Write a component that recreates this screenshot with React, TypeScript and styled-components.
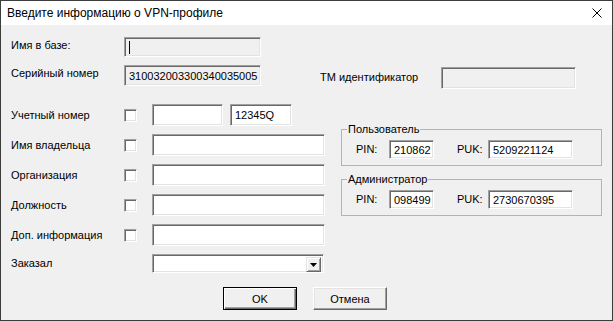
import React from "react";
import styled, { createGlobalStyle, css } from "styled-components";

const GlobalStyle = createGlobalStyle`
  html, body { margin: 0; padding: 0; background: #ffffff; }
  body { font-family: "Liberation Sans", Arial, sans-serif; }
  * { box-sizing: border-box; }
`;

const UI_FONT = `11px "Liberation Sans", Arial, sans-serif`;

const Window = styled.div`
  width: 613px;
  height: 321px;
  border: 1px solid #3c3c3c;
  display: flex;
  flex-direction: column;
  background: #f0f0f0;
  font: ${UI_FONT};
  color: #000;
  overflow: hidden;
`;

const TitleBar = styled.div`
  height: 24px;
  flex: none;
  background: #ffffff;
  display: flex;
  align-items: center;
  justify-content: space-between;
  padding: 0 10px 0 6px;
`;

const Title = styled.span`
  font: 12px "Liberation Sans", Arial, sans-serif;
  color: #000;
`;

const CloseIcon = styled.svg`
  width: 10px;
  height: 10px;
  display: block;
`;

const Body = styled.div`
  flex: 1;
  display: flex;
  flex-direction: column;
  padding: 0 10px;
`;

const TopRow = styled.div<{ $mt: number; $h: number }>`
  display: flex;
  align-items: flex-start;
  margin-top: ${(p) => p.$mt}px;
  height: ${(p) => p.$h}px;
`;

const Label = styled.span<{ $w: number; $dy?: number; $ml?: number }>`
  width: ${(p) => p.$w}px;
  flex: none;
  margin-top: ${(p) => p.$dy ?? 0}px;
  margin-left: ${(p) => p.$ml ?? 0}px;
  line-height: 13px;
  white-space: nowrap;
`;

const sunken = css`
  border: 1px solid;
  border-color: #a0a0a0 #ffffff #ffffff #a0a0a0;
  box-shadow: inset 1px 1px 0 #696969, inset -1px -1px 0 #e3e3e3;
`;

const Field = styled.input<{ $w: number; $h: number; $ro?: boolean; $mt?: number; $ml?: number }>`
  ${sunken};
  width: ${(p) => p.$w}px;
  height: ${(p) => p.$h}px;
  margin: ${(p) => p.$mt ?? 0}px 0 0 ${(p) => p.$ml ?? 0}px;
  flex: none;
  background: ${(p) => (p.$ro ? "#f0f0f0" : "#ffffff")};
  font: ${UI_FONT};
  color: #000;
  padding: 0 2px 0 4px;
  outline: none;
  border-radius: 0;
`;

const CaretBox = styled.div<{ $w: number; $h: number }>`
  ${sunken};
  width: ${(p) => p.$w}px;
  height: ${(p) => p.$h}px;
  background: #f0f0f0;
  flex: none;
  display: flex;
  align-items: center;
  padding-left: 4px;
`;

const Caret = styled.span`
  width: 1px;
  height: 13px;
  background: #000;
`;

const Main = styled.div`
  display: flex;
  margin-top: 15px;
`;

const LeftColumn = styled.div`
  width: 314px;
  flex: none;
  display: flex;
  flex-direction: column;
  gap: 8px;
`;

const FormRow = styled.div<{ $h: number }>`
  display: flex;
  align-items: center;
  height: ${(p) => p.$h}px;
`;

const CheckBox = styled.span`
  ${sunken};
  width: 13px;
  height: 13px;
  flex: none;
  background: #ffffff;
  margin-right: 15px;
`;

const Select = styled.div`
  ${sunken};
  width: 172px;
  height: 19px;
  flex: none;
  background: #ffffff;
  display: flex;
  justify-content: flex-end;
  padding: 2px;
`;

const DropButton = styled.span`
  width: 15px;
  height: 15px;
  background: #f0f0f0;
  border: 1px solid;
  border-color: #e3e3e3 #696969 #696969 #e3e3e3;
  box-shadow: inset 1px 1px 0 #ffffff, inset -1px -1px 0 #a0a0a0;
  display: flex;
  align-items: center;
  justify-content: center;
`;

const RightColumn = styled.div`
  width: 261px;
  margin-left: 16px;
  margin-top: 19px;
  display: flex;
  flex-direction: column;
  gap: 7px;
`;

const Group = styled.fieldset`
  margin: 0;
  padding: 5px 0 6px 0;
  border: 1px solid #b4b4b4;
  min-width: 0;
`;

const Legend = styled.legend`
  margin-left: 5px;
  padding: 0 1px;
  line-height: 13px;
  font: ${UI_FONT};
`;

const CodeRow = styled.div`
  display: flex;
  align-items: center;
  height: 19px;
  padding-left: 14px;
`;

const Footer = styled.div`
  display: flex;
  justify-content: center;
  gap: 16px;
  margin-top: 14px;
  padding-right: 3px;
`;

const Button = styled.button<{ $default?: boolean }>`
  width: 74px;
  height: 23px;
  padding: 0;
  font: ${UI_FONT};
  color: #000;
  background: #f0f0f0;
  border: 1px solid;
  border-color: #ffffff #696969 #696969 #ffffff;
  box-shadow: inset -1px -1px 0 #a0a0a0, inset 1px 1px 0 #e3e3e3;
  border-radius: 0;
  ${(p) =>
    p.$default &&
    css`
      border-color: #000;
      box-shadow: inset 1px 1px 0 #ffffff, inset -1px -1px 0 #696969, inset -2px -2px 0 #a0a0a0;
    `}
`;

const ownerRows = ["Имя владельца", "Организация", "Должность", "Доп. информация"];

const codes = [
  { title: "Пользователь", pin: "210862", puk: "5209221124" },
  { title: "Администратор", pin: "098499", puk: "2730670395" },
];

export default function App() {
  return (
    <>
      <GlobalStyle />
      <Window>
        <TitleBar>
          <Title>Введите информацию о VPN-профиле</Title>
          <CloseIcon viewBox="0 0 10 10">
            <path d="M0.5 0.5 L9.5 9.5 M9.5 0.5 L0.5 9.5" stroke="#000" strokeWidth="1" fill="none" />
          </CloseIcon>
        </TitleBar>
        <Body>
          <TopRow $mt={12} $h={20}>
            <Label $w={113} $dy={2}>Имя в базе:</Label>
            <CaretBox $w={137} $h={20}>
              <Caret />
            </CaretBox>
          </TopRow>
          <TopRow $mt={8} $h={24}>
            <Label $w={113} $dy={2}>Серийный номер</Label>
            <Field $w={137} $h={21} $ro readOnly defaultValue="3100320033003400350051" />
            <Label $w={121} $ml={59} $dy={6}>ТМ идентификатор</Label>
            <Field $w={135} $h={22} $ro $mt={2} readOnly defaultValue="" />
          </TopRow>
          <Main>
            <LeftColumn>
              <FormRow $h={22}>
                <Label $w={113}>Учетный номер</Label>
                <CheckBox />
                <Field $w={71} $h={22} readOnly defaultValue="" />
                <Field $w={62} $h={22} $ml={7} readOnly defaultValue="12345Q" />
              </FormRow>
              {ownerRows.map((label) => (
                <FormRow key={label} $h={22}>
                  <Label $w={113}>{label}</Label>
                  <CheckBox />
                  <Field $w={173} $h={22} readOnly defaultValue="" />
                </FormRow>
              ))}
              <FormRow $h={19}>
                <Label $w={141}>Заказал</Label>
                <Select>
                  <DropButton>
                    <svg width="7" height="4" viewBox="0 0 7 4">
                      <path d="M0 0 H7 L3.5 4 Z" fill="#000" />
                    </svg>
                  </DropButton>
                </Select>
              </FormRow>
            </LeftColumn>
            <RightColumn>
              {codes.map((g) => (
                <Group key={g.title}>
                  <Legend>{g.title}</Legend>
                  <CodeRow>
                    <Label $w={33}>PIN:</Label>
                    <Field $w={45} $h={19} readOnly defaultValue={g.pin} />
                    <Label $w={31} $ml={23}>PUK:</Label>
                    <Field $w={85} $h={19} readOnly defaultValue={g.puk} />
                  </CodeRow>
                </Group>
              ))}
            </RightColumn>
          </Main>
          <Footer>
            <Button $default>OK</Button>
            <Button>Отмена</Button>
          </Footer>
        </Body>
      </Window>
    </>
  );
}
